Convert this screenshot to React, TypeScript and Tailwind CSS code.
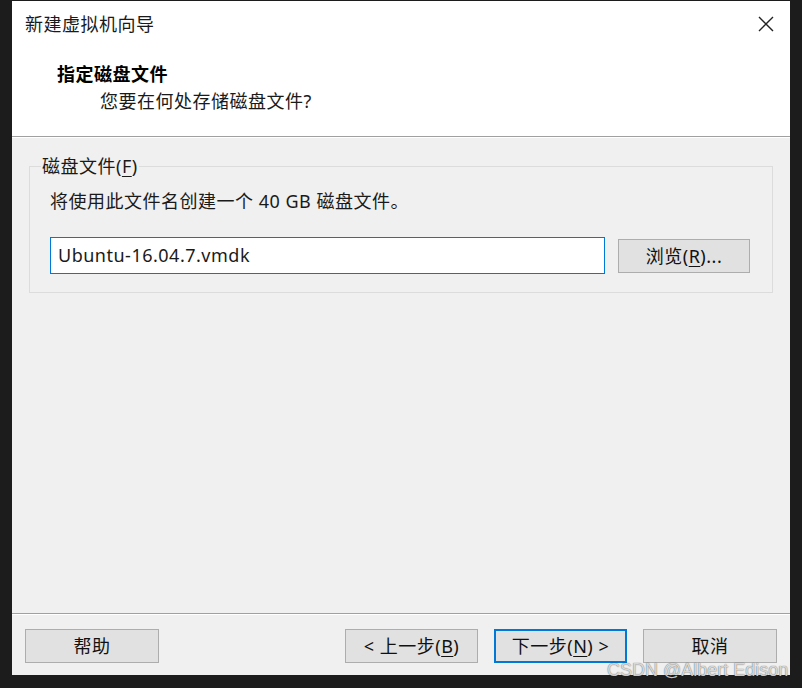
import React from "react";

const font = "font-['Noto_Sans','Noto_Sans_CJK_SC',sans-serif]";

function U({ c }: { c: string }) {
  return <span className="underline underline-offset-[3px] decoration-1">{c}</span>;
}

function Btn({ children, w, primary }: { children: React.ReactNode; w: string; primary?: boolean }) {
  return (
    <div
      className={`${w} h-[34px] flex items-center justify-center bg-[#e1e1e1] text-[18px] leading-none text-[#111] ${
        primary ? "border-2 border-[#0078d7]" : "border border-[#adadad]"
      }`}
    >
      {children}
    </div>
  );
}

export default function App() {
  return (
    <div className={`${font} tracking-[0.5px] relative w-[802px] h-[688px] bg-[#1c1c1c] pt-[1px] pl-[12px]`}>
      <div className="w-[778px] h-[674px] flex flex-col bg-[#f0f0f0]">
        {/* header */}
        <div className="bg-white h-[135px] flex flex-col">
          <div className="h-[46px] flex items-center justify-between pl-[13px] pr-[16px]">
            <span className="text-[18px] text-[#1a1a1a] leading-[26px]">新建虚拟机向导</span>
            <svg width="16" height="16" viewBox="0 0 16 16">
              <path d="M1 1L15 15M15 1L1 15" stroke="#222" strokeWidth="1.4" fill="none" />
            </svg>
          </div>
          <div className="mt-[14px] pl-[45px] text-[18px] leading-[26px] font-bold text-black">指定磁盘文件</div>
          <div className="mt-[1px] pl-[88px] text-[18px] leading-[26px] text-[#1a1a1a]">您要在何处存储磁盘文件?</div>
        </div>
        <div className="h-[1px] bg-[#a0a0a0]" />
        <div className="h-[1px] bg-white" />
        {/* body */}
        <div className="flex-1 pt-[28px] px-[17px]">
          <div className="relative border border-[#dcdcdc] h-[127px] pt-[21px] pl-[20px]">
            <div className="absolute left-[11px] top-[-14px] bg-[#f0f0f0] px-[1px] text-[18px] leading-[26px] text-[#1a1a1a]">
              磁盘文件(<U c="F" />)
            </div>
            <div className="text-[18px] leading-[26px] text-[#1a1a1a]">将使用此文件名创建一个 40 GB 磁盘文件。</div>
            <div className="mt-[23px] flex items-center gap-[13px]">
              <div className="w-[555px] h-[37px] bg-white border border-[#0078d7] flex items-center pl-[7px] text-[18px] text-[#1a1a1a]">
                Ubuntu-16.04.7.vmdk
              </div>
              <Btn w="w-[132px]">
                浏览(<U c="R" />)...
              </Btn>
            </div>
          </div>
        </div>
        {/* footer */}
        <div className="h-[1px] bg-[#a0a0a0]" />
        <div className="h-[1px] bg-white" />
        <div className="h-[60px] flex items-start pt-[14px] px-[13px]">
          <Btn w="w-[134px]">帮助</Btn>
          <div className="flex-1" />
          <div className="flex gap-[16px]">
            <Btn w="w-[133px]">
              &lt; 上一步(<U c="B" />)
            </Btn>
            <Btn w="w-[133px]" primary>
              下一步(<U c="N" />) &gt;
            </Btn>
            <Btn w="w-[134px]">取消</Btn>
          </div>
        </div>
      </div>
      <div className="absolute left-[607px] top-[658px] tracking-normal text-[18px] leading-[24px] text-[rgba(255,255,255,0.8)] font-['Liberation_Sans',sans-serif] [text-shadow:0_0_1px_rgba(0,0,0,0.8)]">
        CSDN @Albert Edison
      </div>
    </div>
  );
}
